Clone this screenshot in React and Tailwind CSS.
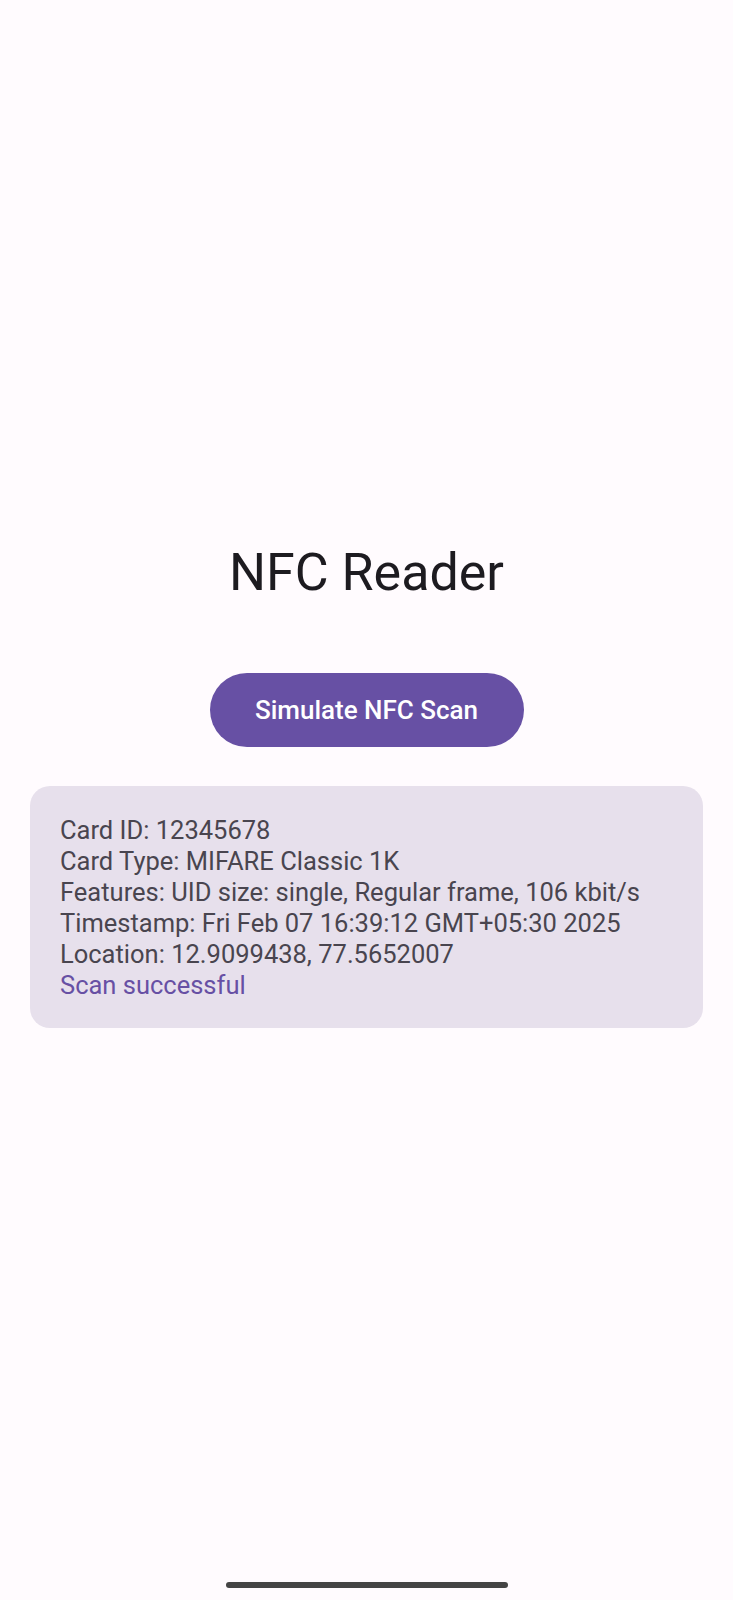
import React from 'react';

const lines = [
  'Card ID: 12345678',
  'Card Type: MIFARE Classic 1K',
  'Features: UID size: single, Regular frame, 106 kbit/s',
  'Timestamp: Fri Feb 07 16:39:12 GMT+05:30 2025',
  'Location: 12.9099438, 77.5652007',
];

export default function App() {
  return (
    <div
      className="min-h-[1600px] h-[1600px] bg-[#FFFBFE] flex flex-col items-center"
      style={{ fontFamily: 'Roboto, "Noto Sans", sans-serif' }}
    >
      <h1 className="mt-[541px] text-[52px] leading-[64px] text-[#1D1B20] font-normal">
        NFC Reader
      </h1>

      <button className="mt-[68px] w-[314px] h-[74px] rounded-full bg-[#6750A4] text-white text-[26px] font-medium">
        Simulate NFC Scan
      </button>

      <div className="mt-[39px] w-[673px] rounded-[20px] bg-[#E7E0EC] pl-[30px] pr-[28px] pt-[29px] pb-[27px] text-[25.5px] leading-[31px]">
        {lines.map((l) => (
          <p key={l} className="text-[#49454F]">{l}</p>
        ))}
        <p className="text-[#6750A4]">Scan successful</p>
      </div>

      <div className="mt-auto mb-[12px] w-[282px] h-[6px] rounded-full bg-[#444444]" />
    </div>
  );
}
